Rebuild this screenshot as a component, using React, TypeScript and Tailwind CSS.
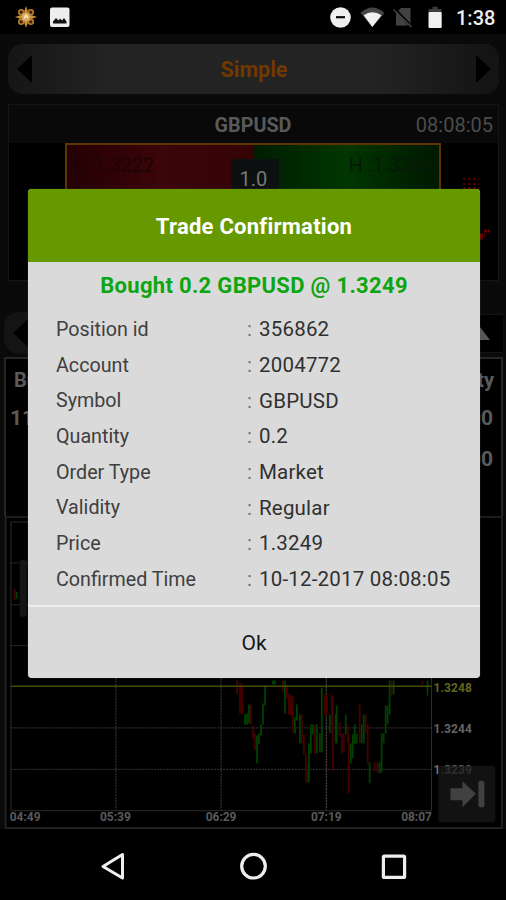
interface Detail {
  label: string
  value: string
}

const details: Detail[] = [
  { label: 'Position id', value: '356862' },
  { label: 'Account', value: '2004772' },
  { label: 'Symbol', value: 'GBPUSD' },
  { label: 'Quantity', value: '0.2' },
  { label: 'Order Type', value: 'Market' },
  { label: 'Validity', value: 'Regular' },
  { label: 'Price', value: '1.3249' },
  { label: 'Confirmed Time', value: '10-12-2017 08:08:05' },
]

// x, top, bottom, rising
type Candle = [number, number, number, boolean]

const candles: Candle[] = [
  [14, 588, 599, false],
  [16, 591, 598, true],
  [237, 680, 694, false],
  [240, 682, 713, false],
  [242, 684, 714, false],
  [245, 714, 724, true],
  [247, 713, 724, true],
  [249, 704, 723, true],
  [251, 704, 724, false],
  [253, 725, 738, false],
  [255, 733, 750, false],
  [257, 735, 763, true],
  [259, 733, 744, true],
  [261, 724, 735, true],
  [263, 703, 724, true],
  [265, 685, 705, true],
  [273, 680, 684, true],
  [275, 680, 684, true],
  [283, 680, 691, false],
  [285, 680, 713, true],
  [287, 684, 698, false],
  [289, 693, 714, false],
  [291, 695, 715, false],
  [293, 696, 732, false],
  [295, 717, 733, true],
  [297, 704, 720, true],
  [300, 714, 743, true],
  [302, 714, 743, false],
  [304, 734, 754, false],
  [306, 754, 782, false],
  [308, 764, 783, false],
  [309, 743, 782, true],
  [311, 724, 753, true],
  [313, 724, 734, true],
  [315, 724, 753, false],
  [317, 724, 753, true],
  [320, 733, 752, true],
  [322, 687, 752, true],
  [325, 694, 715, false],
  [327, 694, 715, false],
  [330, 714, 732, true],
  [332, 695, 734, false],
  [333, 695, 771, false],
  [336, 714, 743, true],
  [337, 705, 743, true],
  [340, 722, 736, false],
  [342, 733, 753, false],
  [344, 733, 751, false],
  [346, 714, 734, true],
  [348, 724, 743, false],
  [349, 734, 793, false],
  [351, 743, 763, true],
  [353, 734, 758, true],
  [355, 724, 744, true],
  [357, 733, 743, true],
  [360, 704, 743, false],
  [362, 724, 743, true],
  [364, 714, 743, true],
  [366, 714, 733, false],
  [368, 724, 763, false],
  [370, 762, 783, true],
  [375, 762, 772, false],
  [378, 762, 773, false],
  [380, 762, 773, true],
  [382, 733, 772, true],
  [384, 733, 743, true],
  [386, 705, 733, true],
  [388, 705, 724, true],
  [390, 680, 714, true],
  [392, 680, 695, false],
  [394, 680, 694, true],
  [423, 680, 684, false],
  [428, 680, 695, true],
]

const times = [
  { x: 24.5, text: '04:49' },
  { x: 115, text: '05:39' },
  { x: 221, text: '06:29' },
  { x: 326.5, text: '07:19' },
  { x: 417, text: '08:07' },
]

function StatusBar() {
  return (
    <div className="flex h-[34px] items-center bg-black pl-[14px] pr-[11px]">
      <svg width="24" height="24" viewBox="-12 -12 24 24">
        <path d="M0-11 2-5 0-3-2-5ZM0 11 2 5 0 3-2 5ZM-11 0-5-2-3 0-5 2ZM11 0 5-2 3 0 5 2Z" fill="#c79136" />
        <g fill="#3a2206" stroke="#b57d29" strokeWidth="1.6">
          <circle cx="-4.8" cy="-4.8" r="2.4" />
          <circle cx="4.8" cy="-4.8" r="2.4" />
          <circle cx="-4.8" cy="4.8" r="2.4" />
          <circle cx="4.8" cy="4.8" r="2.4" />
        </g>
        <circle r="4.6" fill="#d9a75a" />
        <path d="M-2 1.5 0-2 2 1" fill="none" stroke="#fff0ce" strokeWidth="1.4" />
      </svg>
      <svg className="ml-[11px]" width="22" height="22" viewBox="0 0 22 22">
        <rect x="1" y="1.5" width="19.5" height="19.5" rx="2" fill="#ededed" />
        <path d="M4 17.5v-2l3-3.5 2.5 2.5 1.5-2 2 2 2-2.5 2.5 3.5v2Z" fill="#111" />
      </svg>
      <div className="flex-1" />
      <svg width="114" height="24" viewBox="330 5 114 24">
        <circle cx="340.5" cy="17.5" r="10.3" fill="#efefef" />
        <path d="M336 17.2h9" stroke="#090909" strokeWidth="2.2" />
        <path d="M360.5 13Q372 2 384.5 13L372.3 27Z" fill="#454545" />
        <path d="M363.7 15.3Q372.2 9 381.5 15.3L372.3 27Z" fill="#f1f1f1" />
        <path d="M401 8h9.5v17.5H396V13Z" fill="#424242" />
        <path d="M394 8.5 412 27" stroke="#000" strokeWidth="3" />
        <path d="M393.5 9.5 411.5 27" stroke="#444" strokeWidth="1.6" />
        <path d="M428.5 12V9h4V6.8h5V9h4v3Z" fill="#3e3e3e" />
        <rect x="428.5" y="12" width="13.2" height="16" rx="1" fill="#f1f1f1" />
      </svg>
      <span className="ml-[12px] w-[39px] whitespace-nowrap pt-[2px] text-[20px] font-medium leading-none text-[#ededed]">1:38</span>
    </div>
  )
}

function ModeBar() {
  return (
    <div className="ml-[7px] mr-[6px] mt-[10px] flex h-[50px] items-center justify-between rounded-[15px] bg-linear-to-r from-[#151515] via-[#232323] via-20% to-[#232323]">
      <div className="flex h-full w-full items-center justify-between rounded-[15px] bg-linear-to-r from-transparent via-transparent via-75% to-[#131313] pl-[9px] pr-[8px]">
        <svg width="16" height="28" viewBox="0 0 16 28"><path d="M0 14 15 0v28Z" /></svg>
        <span className="pt-[2px] text-[21.5px] font-bold text-[#713900]">Simple</span>
        <svg width="16" height="28" viewBox="0 0 16 28"><path d="M16 14 1 0v28Z" /></svg>
      </div>
    </div>
  )
}

function QuotePanel() {
  return (
    <div className="ml-[7px] mr-[6px] mt-[10px] h-[178px] border border-[#151515] bg-black">
      <div className="grid h-[38px] grid-cols-[1fr_auto_1fr] items-center bg-[#090909] pl-[4px] pr-[5px] pt-[3px] text-[20px]">
        <span />
        <span className="text-[19.8px] font-bold text-[#595959]">GBPUSD</span>
        <span className="text-right text-[#4c4c4c]">08:08:05</span>
      </div>
      <div className="flex">
        <div className="ml-[56px] flex h-[90px] w-[376px] border-2 border-[#5e3500] text-[20px]">
          <div className="h-full w-[187px] bg-linear-to-r from-[#240003] via-[#3b0509] to-[#350306] pl-[5px] pt-[5px] text-[#1b0507]">L&nbsp; 1.3222</div>
          <div className="h-full flex-1 bg-linear-to-r from-[#001d00] via-[#003600] to-[#001900] pr-[5px] pt-[5px] text-right text-[#071909]">H :1.3268</div>
          <div className="-ml-[208px] mr-[160px] mt-[14px] flex h-[60px] w-[48px] justify-center rounded-[2px] bg-[#0d1010] pr-[3px] pt-[5px] text-[#777]">1.0</div>
        </div>
        <svg width="52" height="130" viewBox="441 143 52 130">
          <path d="M463 179h16M463 184h16M463 188h16" stroke="#480000" strokeWidth="2" strokeDasharray="3 2" />
          <path d="M480 235h5M484 231h6M480 238h4" stroke="#660000" strokeWidth="3" strokeDasharray="3 1" />
        </svg>
      </div>
    </div>
  )
}

function PositionsPanel() {
  return (
    <>
      <div className="ml-[3px] mr-[2px] mt-[31px] flex h-[42px] items-center justify-between">
        <div className="flex h-full w-[245px] items-center rounded-l-[15px] bg-[#141414] pl-[9px]">
          <svg width="15" height="28" viewBox="0 0 15 28"><path d="M0 14 15 0v28Z" /></svg>
        </div>
        <div className="flex h-[39px] w-[245px] items-center justify-end border-y border-[#151515] bg-black pr-[13px]">
          <svg width="19" height="13" viewBox="0 0 19 13"><path d="M0 13 9 0l10 13Z" fill="#575757" /></svg>
        </div>
      </div>
      <div className="ml-[3px] mr-[2px] mt-[3px] flex h-[159px] justify-between border-2 border-b-0 border-[#262626] bg-black px-[7px] pt-[8px] text-[20px] font-bold text-[#5a5a5a]">
        <div className="leading-[26px]">
          <p className="pl-px">Buy</p>
          <p className="-ml-[3px] mt-[12px] text-[21px]">11</p>
        </div>
        <div className="pr-px text-right leading-[26px]">
          <p className="-mr-px">Qty</p>
          <p className="mt-[12px] text-[21px]">0.00</p>
          <p className="mt-[15px] text-[21px]">0.00</p>
        </div>
      </div>
    </>
  )
}

function PriceChart() {
  return (
    <svg className="-ml-px" width="506" height="314" viewBox="0 515 506 314">
      <path d="M5 515v313h497.5V516H5" fill="#000" stroke="#252525" strokeWidth="1.7" />
      <path d="M10 521h422M10.3 521v289.5H432V520" fill="none" stroke="#2b2b2b" />
      <path d="M10 562h422M10 604h422M10 645h422M10 727.5h422M10 769h422" fill="none" stroke="#383838" strokeDasharray="2 1" />
      <path d="M115.5 521v289M221 521v289" fill="none" stroke="#3e3e3e" strokeDasharray="2 1" />
      <path d="M326.5 521v289" stroke="#5a5a5a" strokeDasharray="2 1" />
      <rect x="19" y="559" width="7" height="57" rx="2" fill="#151515" />
      {candles.map(([x, top, bottom, rising], i) => (
        <path key={i} d={`M${x} ${top}V${bottom}`} stroke={rising ? '#004000' : '#470000'} strokeWidth="1.8" />
      ))}
      <path d="M10 685.7h422" stroke="#444d00" strokeWidth="1.3" />
      <g fontSize="12" fontWeight="700" fill="#5a5a5a">
        <text x="434" y="691" fill="#62651e" textLength="38.5">1.3248</text>
        <text x="434" y="732.5" fill="#646464" textLength="38.5">1.3244</text>
        <text x="434" y="774" fill="#707070" textLength="38.5">1.3239</text>
        {times.map((time) => (
          <text key={time.text} x={time.x} y="821" textAnchor="middle">{time.text}</text>
        ))}
      </g>
      <rect x="439" y="765.5" width="57" height="56.5" rx="3" fill="#181818" fillOpacity=".75" />
      <path d="M451 788h12v-7l13.5 12.5L463 807v-7h-12Z" fill="#414141" />
      <rect x="479" y="780.5" width="6" height="26.5" rx="2" fill="#414141" />
    </svg>
  )
}

function NavigationBar() {
  return (
    <div className="flex flex-1 items-center justify-around bg-black px-[41px] pt-[2px]">
      <svg width="28" height="30" viewBox="0 0 28 30"><path d="M5 15.5 24.5 3.5v23.5Z" fill="none" stroke="#eee" strokeWidth="3" strokeLinejoin="round" /></svg>
      <svg width="28" height="30" viewBox="0 0 28 30"><circle cx="14.5" cy="15.2" r="11.8" fill="none" stroke="#eee" strokeWidth="3.2" /></svg>
      <svg width="28" height="30" viewBox="0 0 28 30"><rect x="3.4" y="5.2" width="21.2" height="21.2" rx="1" fill="none" stroke="#eee" strokeWidth="3.2" /></svg>
    </div>
  )
}

function ConfirmationDialog() {
  return (
    <div role="dialog" aria-labelledby="dialog-title" className="absolute left-[28px] top-[189px] flex h-[489px] w-[452px] flex-col overflow-hidden rounded-[4px] bg-[#dadada] shadow-[0_0_1px_#777]">
      <h1 id="dialog-title" className="flex h-[73px] items-center justify-center bg-[#669900] pt-[2px] text-[22px] font-bold tracking-[0.25px] text-white">Trade Confirmation</h1>
      <p className="mt-[9px] text-center text-[22px] font-bold leading-[30px] tracking-[0.32px] text-[#0da512]">Bought 0.2 GBPUSD @ 1.3249</p>
      <dl className="mt-[11px] pl-[28px] text-[20.5px] text-[#303030]">
        {details.map((detail) => (
          <div key={detail.label} className="flex h-[35.65px] items-center">
            <dt className="w-[191px] text-[19.7px] text-[#404040]">{detail.label}</dt>
            <span className="w-[12px] text-[#777]">:</span>
            <dd className="tracking-[0.2px]">{detail.value}</dd>
          </div>
        ))}
      </dl>
      <button className="mt-auto h-[73px] border-t-2 border-[#eee] pt-[2px] text-[21px] text-[#171717]">Ok</button>
    </div>
  )
}

export default function App() {
  return (
    <main className="relative flex h-[900px] w-[506px] flex-col overflow-hidden bg-[#0a0a0a] font-[Roboto,sans-serif]">
      <StatusBar />
      <div className="flex h-[795px] flex-col px-px">
        <ModeBar />
        <QuotePanel />
        <PositionsPanel />
        <PriceChart />
      </div>
      <NavigationBar />
      <ConfirmationDialog />
    </main>
  )
}
